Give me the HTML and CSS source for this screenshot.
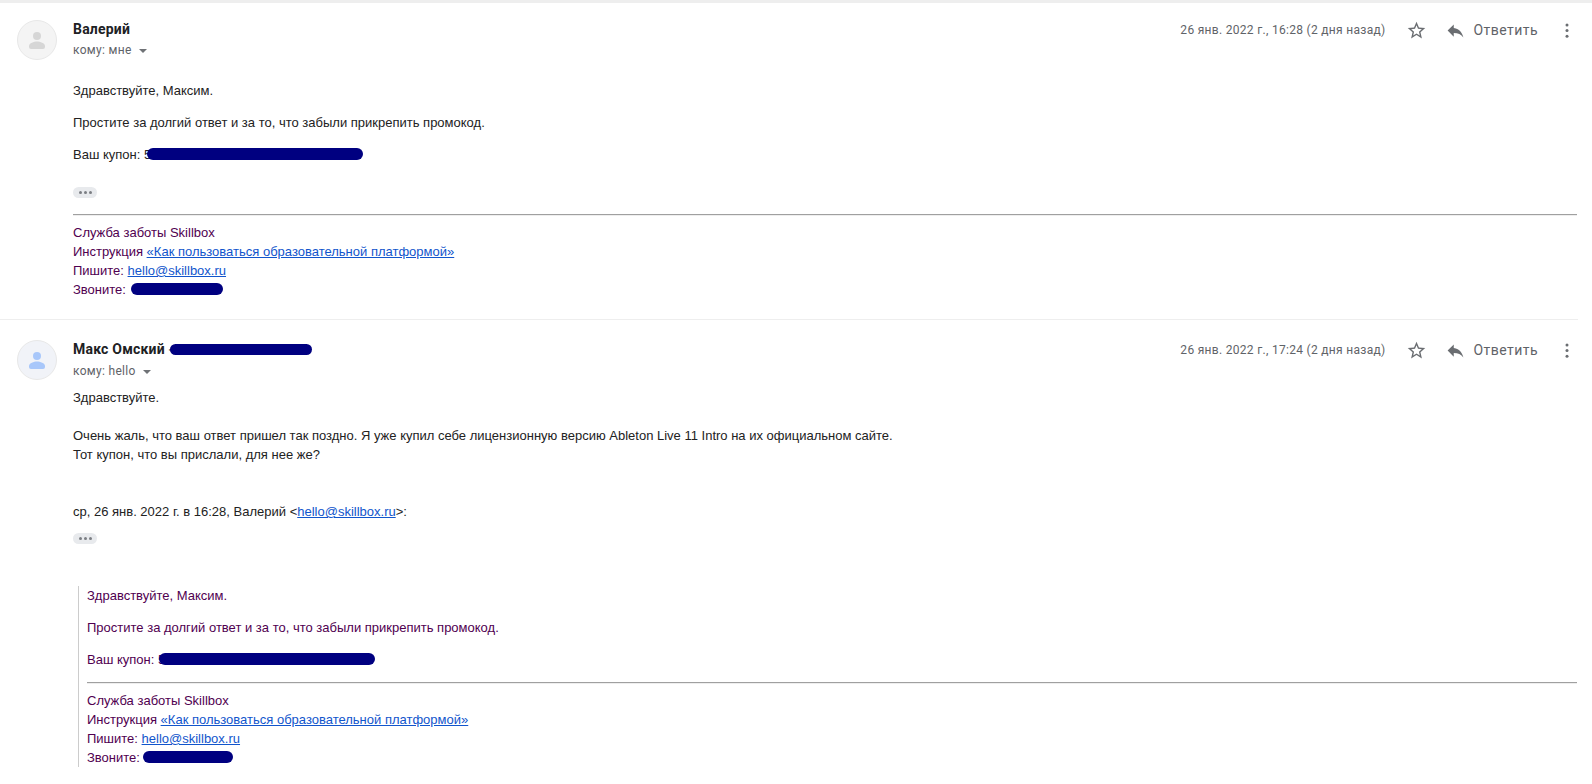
FILE: index.html
```html
<!DOCTYPE html>
<html lang="ru">
<head>
    <meta charset="UTF-8">
    <title>Переписка</title>
    <link rel="stylesheet" href="styles.css">
</head>
<body>
    <div class="top-shadow"></div>

    <!-- First message -->
    <div class="message first">
        <div class="avatar">
            <svg viewBox="0 0 16 18" width="16" height="18"><circle cx="8" cy="5" r="4"/><path d="M0 15c0-3 5-4.500 8-4.500s8 1.500 8 4.500v1a2 2 0 0 1-2 2H2a2 2 0 0 1-2-2z"/></svg>
        </div>
        <div class="content">
            <div class="head">
                <div class="who">
                    <div class="name">Валерий</div>
                    <div class="to">кому: мне <span class="caret"></span></div>
                </div>
                <div class="meta">
                    <span class="date">26 янв. 2022 г., 16:28 (2 дня назад)</span>
                    <svg class="star" viewBox="0 0 24 24" width="21" height="21"><path d="M22 9.24l-7.190-.62L12 2 9.190 8.630 2 9.240l5.460 4.730L5.820 21 12 17.270 18.180 21l-1.630-7.030L22 9.240zM12 15.400l-3.760 2.270 1-4.280-3.320-2.880 4.380-.38L12 6.100l1.710 4.040 4.380.38-3.320 2.880 1 4.280L12 15.400z"/></svg>
                    <svg class="reply" viewBox="0 0 24 24" width="21" height="21"><path d="M10 9V5l-7 7 7 7v-4.100c5 0 8.500 1.600 11 5.100-1-5-4-10-11-11z"/></svg>
                    <span class="reply-text">Ответить</span>
                    <svg class="more" viewBox="0 0 4 16" width="4" height="15"><circle cx="2" cy="2" r="1.600"/><circle cx="2" cy="8" r="1.600"/><circle cx="2" cy="14" r="1.600"/></svg>
                </div>
            </div>
            <div class="mail">
                <p class="para">Здравствуйте, Максим.</p>
                <p class="para">Простите за долгий ответ и за то, что забыли прикрепить промокод.</p>
                <p class="para">Ваш купон: 5<span class="redact coupon"></span></p>
                <div class="dots"><i></i><i></i><i></i></div>
                <hr class="rule">
                <div class="signature">
                    <div>Служба заботы Skillbox</div>
                    <div>Инструкция <a href="#">«Как пользоваться образовательной платформой»</a></div>
                    <div>Пишите: <a href="#">hello@skillbox.ru</a></div>
                    <div>Звоните: <span class="redact phone"></span></div>
                </div>
            </div>
        </div>
    </div>

    <div class="divider"></div>

    <!-- Reply -->
    <div class="message second">
        <div class="avatar me">
            <svg viewBox="0 0 16 18" width="16" height="18"><circle cx="8" cy="5" r="4"/><path d="M0 15c0-3 5-4.500 8-4.500s8 1.500 8 4.500v1a2 2 0 0 1-2 2H2a2 2 0 0 1-2-2z"/></svg>
        </div>
        <div class="content">
            <div class="head">
                <div class="who">
                    <div class="name">Макс Омский <span class="addr">&lt;</span><span class="redact sender"></span></div>
                    <div class="to">кому: hello <span class="caret"></span></div>
                </div>
                <div class="meta">
                    <span class="date">26 янв. 2022 г., 17:24 (2 дня назад)</span>
                    <svg class="star" viewBox="0 0 24 24" width="21" height="21"><path d="M22 9.24l-7.190-.62L12 2 9.190 8.630 2 9.240l5.460 4.730L5.820 21 12 17.270 18.180 21l-1.630-7.030L22 9.240zM12 15.400l-3.760 2.270 1-4.280-3.320-2.880 4.380-.38L12 6.100l1.710 4.040 4.380.38-3.320 2.880 1 4.280L12 15.400z"/></svg>
                    <svg class="reply" viewBox="0 0 24 24" width="21" height="21"><path d="M10 9V5l-7 7 7 7v-4.100c5 0 8.500 1.600 11 5.100-1-5-4-10-11-11z"/></svg>
                    <span class="reply-text">Ответить</span>
                    <svg class="more" viewBox="0 0 4 16" width="4" height="15"><circle cx="2" cy="2" r="1.600"/><circle cx="2" cy="8" r="1.600"/><circle cx="2" cy="14" r="1.600"/></svg>
                </div>
            </div>
            <div class="mail reply-body">
                <div>Здравствуйте.</div>
                <div class="gap"></div>
                <div>Очень жаль, что ваш ответ пришел так поздно. Я уже купил себе лицензионную версию Ableton Live 11 Intro на их официальном сайте.</div>
                <div>Тот купон, что вы прислали, для нее же?</div>
                <div class="attribution">ср, 26 янв. 2022 г. в 16:28, Валерий &lt;<a href="#">hello@skillbox.ru</a>&gt;:</div>
                <div class="dots"><i></i><i></i><i></i></div>
                <blockquote class="quote">
                    <p class="para">Здравствуйте, Максим.</p>
                    <p class="para">Простите за долгий ответ и за то, что забыли прикрепить промокод.</p>
                    <p class="para">Ваш купон: 5<span class="redact coupon"></span></p>
                    <hr class="rule">
                    <div class="signature">
                        <div>Служба заботы Skillbox</div>
                        <div>Инструкция <a href="#">«Как пользоваться образовательной платформой»</a></div>
                        <div>Пишите: <a href="#">hello@skillbox.ru</a></div>
                        <div>Звоните: <span class="redact phone"></span></div>
                    </div>
                </blockquote>
            </div>
        </div>
    </div>
</body>
</html>
```

FILE: styles.css
```css
body {
    margin: 0;
    background: white;
    color: #222222;
    font-family: "Liberation Sans", Arial, sans-serif;
    font-size: 13px;
    line-height: 19px;
    overflow: hidden;
}

.top-shadow {
    height: 3px;
    background: #eeeeee;
}

.message {
    display: flex;
    align-items: flex-start;
    padding-left: 17px;
    padding-right: 15px;
}

.message.first {
    padding-top: 17px;
}

.message.second {
    padding-top: 20px;
}

.avatar {
    flex: none;
    width: 40px;
    height: 40px;
    box-sizing: border-box;
    margin-right: 16px;
    border: 1px solid #e8e8e8;
    border-radius: 50%;
    background: #f4f4f4;
    display: flex;
    justify-content: center;
    align-items: center;
}

.avatar svg {
    fill: #d6d6d6;
}

.avatar.me {
    background: #f1f3f8;
}

.avatar.me svg {
    fill: #a8c7fa;
}

.content {
    flex: 1;
    min-width: 0;
}

.head {
    display: flex;
    justify-content: space-between;
    align-items: flex-start;
}

.name {
    font-family: Roboto, sans-serif;
    font-size: 14px;
    font-weight: 700;
    line-height: 18px;
    letter-spacing: 0.2px;
    color: #202124;
}

.addr {
    font-weight: 400;
    color: #5f6368;
    font-size: 12px;
}

.to {
    font-family: Roboto, sans-serif;
    font-size: 12px;
    line-height: 20px;
    letter-spacing: 0.3px;
    margin-top: 2px;
    color: #5f6368;
}

.caret {
    display: inline-block;
    margin-left: 4px;
    vertical-align: middle;
    border-top: 4px solid #6f7276;
    border-left: 4px solid transparent;
    border-right: 4px solid transparent;
}

.meta {
    display: flex;
    align-items: center;
    height: 20px;
    font-family: Roboto, sans-serif;
    color: #5f6368;
}

.date {
    font-size: 12px;
    letter-spacing: 0.3px;
}

.meta svg {
    fill: #6a6d71;
    flex: none;
}

.star {
    margin-left: 20px;
}

.reply {
    margin-left: 18px;
}

.reply-text {
    margin-left: 8px;
    font-size: 14px;
    letter-spacing: 0.45px;
}

.more {
    margin-left: 27px;
    margin-right: 8px;
}

.mail {
    margin-top: 21px;
}

.para {
    margin: 0 0 13px 0;
}

.mail a {
    color: #1155cc;
}

.redact {
    display: inline-block;
    height: 12px;
    background: navy;
    border-radius: 6px;
    vertical-align: -1px;
}

.coupon {
    width: 216px;
    margin-left: -4px;
}

.phone {
    width: 92px;
    margin-left: 1px;
}

.sender {
    width: 142px;
    height: 11px;
    margin-left: -5px;
}

.dots {
    width: 24px;
    height: 11px;
    margin-top: 23px;
    border-radius: 6px;
    background: #e8eaed;
    display: flex;
    justify-content: center;
    align-items: center;
    gap: 2px;
}

.dots i {
    width: 3px;
    height: 3px;
    border-radius: 50%;
    background: #7b7e83;
}

.rule {
    margin: 16px 0 7px 0;
    border: none;
    border-top: 1px solid #a0a0a0;
    border-bottom: 1px solid #eeeeee;
}

.signature {
    color: #500050;
}

.divider {
    height: 1px;
    margin-top: 20px;
    margin-right: 14px;
    background: #eeeeee;
}

.reply-body {
    margin-top: 7px;
}

.gap {
    height: 19px;
}

.attribution {
    margin-top: 38px;
}

.reply-body .dots {
    margin-top: 12px;
}

.quote {
    margin: 42px 0 0 5px;
    padding-left: 8px;
    border-left: 1px solid #cccccc;
    color: #500050;
}

.quote .rule {
    margin-top: 6px;
}

.quote .coupon {
    margin-left: -6px;
}

.quote .phone {
    width: 90px;
    margin-left: -1px;
}
```
